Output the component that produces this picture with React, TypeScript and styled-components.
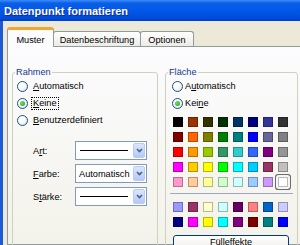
import React from "react";
import styled, { createGlobalStyle } from "styled-components";

const GlobalStyle = createGlobalStyle`
  html, body {
    margin: 0;
    padding: 0;
    background: #ece9d8;
  }
  body {
    font-family: "Liberation Sans", Arial, sans-serif;
    font-size: 9.2px;
    color: #000;
  }
`;

const Window = styled.div`
  width: 300px;
  height: 245px;
  overflow: hidden;
  display: flex;
  flex-direction: column;
  background: #ece9d8;
`;

const TitleBar = styled.div`
  flex: none;
  height: 21px;
  display: flex;
  align-items: center;
  padding-left: 4px;
  background: linear-gradient(
    #3c8cf8 0%,
    #0a5fe8 15%,
    #0055e5 60%,
    #0049d6 90%,
    #003cc0 100%
  );
  color: #fff;
  font: bold 11px "Liberation Sans", Arial, sans-serif;
  text-shadow: 1px 1px 0 #0f2a9c;
`;

const Body = styled.div`
  flex: 1;
  min-height: 0;
  display: flex;
  flex-direction: column;
  border-left: 3px solid #1e5ad6;
  padding: 6px 0 0 4px;
`;

const TabRow = styled.div`
  flex: none;
  height: 19px;
  display: flex;
  align-items: flex-end;
  position: relative;
  z-index: 1;
`;

const Tab = styled.div<{ $active?: boolean; $w: number }>`
  box-sizing: border-box;
  width: ${(p) => p.$w}px;
  height: ${(p) => (p.$active ? 20 : 15)}px;
  margin-bottom: ${(p) => (p.$active ? -1 : 0)}px;
  margin-left: ${(p) => (p.$active ? 0 : -1)}px;
  display: flex;
  align-items: center;
  justify-content: center;
  padding-top: ${(p) => (p.$active ? 2 : 1)}px;
  border: 1px solid #919b9c;
  border-bottom: none;
  border-top: ${(p) => (p.$active ? "3px solid #f2a535" : "1px solid #919b9c")};
  border-radius: 3px 3px 0 0;
  background: ${(p) =>
    p.$active ? "#fcfcfe" : "linear-gradient(#ffffff, #ecebe6)"};
  white-space: nowrap;
  z-index: ${(p) => (p.$active ? 2 : 0)};

  &:first-child {
    margin-left: 0;
  }
`;

const Panel = styled.div`
  flex: 1;
  min-height: 0;
  display: flex;
  gap: 7px;
  align-items: flex-start;
  border: 1px solid #919b9c;
  border-right: none;
  padding: 20px 0 0 4px;
  background: linear-gradient(#fcfcfe, #f3f2ea);
`;

const Group = styled.fieldset<{ $w: number }>`
  box-sizing: border-box;
  width: ${(p) => p.$w}px;
  height: 200px;
  flex: none;
  margin: 0;
  padding: 0;
  border: 1px solid #d0d0bf;
  border-radius: 3px;
`;

const Legend = styled.legend`
  margin-left: 2px;
  padding: 0 1px;
  line-height: 11px;
  color: #15388f;
`;

const RadioRow = styled.div<{ $pad: number; $gap: number }>`
  height: 17px;
  display: flex;
  align-items: center;
  padding-left: ${(p) => p.$pad}px;
  gap: ${(p) => p.$gap}px;
`;

const RadioDot = styled.span<{ $on?: boolean }>`
  box-sizing: border-box;
  width: 11px;
  height: 11px;
  flex: none;
  border-radius: 50%;
  border: 1px solid #1c5180;
  background: radial-gradient(circle at 35% 35%, #ffffff 30%, #dcdcd4 100%);
  display: flex;
  align-items: center;
  justify-content: center;

  &::after {
    content: "";
    display: ${(p) => (p.$on ? "block" : "none")};
    width: 5px;
    height: 5px;
    border-radius: 50%;
    background: radial-gradient(circle at 35% 35%, #6ee06a, #1f9c1f);
  }
`;

const RadioText = styled.span<{ $focus?: boolean }>`
  padding: 0 1px;
  line-height: 11px;
  outline: ${(p) => (p.$focus ? "1px dotted #000" : "none")};
`;

const FieldList = styled.div`
  display: flex;
  flex-direction: column;
  gap: 4px;
  margin-top: 12px;
  padding-left: 20px;
`;

const FieldRow = styled.div`
  display: flex;
  align-items: center;
  height: 19px;
`;

const FieldLabel = styled.span`
  width: 42px;
  flex: none;
`;

const Combo = styled.div`
  box-sizing: border-box;
  width: 72px;
  height: 19px;
  display: flex;
  align-items: center;
  border: 1px solid #7f9db9;
  background: #fff;
`;

const ComboLine = styled.span`
  flex: 1;
  height: 1px;
  margin: 0 5px 0 4px;
  background: #000;
`;

const ComboText = styled.span`
  flex: 1;
  padding-left: 3px;
  white-space: nowrap;
  overflow: hidden;
`;

const DropButton = styled.span`
  box-sizing: border-box;
  width: 12px;
  height: 15px;
  flex: none;
  margin-right: 1px;
  display: flex;
  align-items: center;
  justify-content: center;
  border: 1px solid #b9cbf3;
  border-radius: 2px;
  background: linear-gradient(#dbe6fd, #b5c9f5);
`;

const Swatches = styled.div<{ $top?: number }>`
  display: grid;
  grid-template-columns: repeat(8, 10px);
  gap: 5px;
  padding-left: 7px;
  margin-top: ${(p) => p.$top ?? 0}px;
`;

const Swatch = styled.span<{ $c: string; $sel?: boolean }>`
  box-sizing: border-box;
  width: 10px;
  height: 10px;
  background: ${(p) => p.$c};
  border: 1px solid rgba(0, 0, 0, 0.28);
  box-shadow: ${(p) =>
    p.$sel ? "0 0 0 2px #f6f6f6, 0 0 0 3px #6b6b6b" : "none"};
  border-radius: ${(p) => (p.$sel ? 1 : 0)}px;
`;

const Separator = styled.div`
  height: 1px;
  margin: 6px 4px 8px 4px;
  background: #a0a8c0;
`;

const FillButton = styled.div`
  box-sizing: border-box;
  width: 116px;
  height: 20px;
  margin: 8px 0 0 7px;
  display: flex;
  justify-content: center;
  padding-top: 1px;
  line-height: 11px;
  border: 1px solid #003c74;
  border-radius: 3px;
  background: linear-gradient(#ffffff, #ecebe6 85%, #d6d0c5);
`;

const topColors = [
  "#000000", "#993300", "#333300", "#003300", "#003366", "#000080", "#333399", "#333333",
  "#800000", "#FF6600", "#808000", "#008000", "#008080", "#0000FF", "#666699", "#808080",
  "#FF0000", "#FF9900", "#99CC00", "#339966", "#33CCCC", "#3366FF", "#800080", "#969696",
  "#FF00FF", "#FFCC00", "#FFFF00", "#00FF00", "#00FFFF", "#00CCFF", "#993366", "#C0C0C0",
  "#FF99CC", "#FFCC99", "#FFFF99", "#CCFFCC", "#CCFFFF", "#99CCFF", "#CC99FF", "#FFFFFF",
];

const chartColors = [
  "#9999FF", "#993366", "#FFFFCC", "#CCFFFF", "#660066", "#FF8080", "#0066CC", "#CCCCFF",
  "#000080", "#FF00FF", "#FFFF00", "#00FFFF", "#800080", "#800000", "#008080", "#0000FF",
];

const Chevron = () => (
  <svg width="7" height="5" viewBox="0 0 7 5">
    <path d="M1 1 L3.5 3.6 L6 1" fill="none" stroke="#4d6185" strokeWidth="1.6" />
  </svg>
);

const ComboBox: React.FC<{ text?: string }> = ({ text }) => (
  <Combo>
    {text ? <ComboText>{text}</ComboText> : <ComboLine />}
    <DropButton>
      <Chevron />
    </DropButton>
  </Combo>
);

const App: React.FC = () => (
  <>
    <GlobalStyle />
    <Window>
      <TitleBar>Datenpunkt formatieren</TitleBar>
      <Body>
        <TabRow>
          <Tab $active $w={47}>Muster</Tab>
          <Tab $w={88}>Datenbeschriftung</Tab>
          <Tab $w={54}>Optionen</Tab>
        </TabRow>
        <Panel>
          <Group $w={146}>
            <Legend>Rahmen</Legend>
            <RadioRow $pad={4} $gap={4}>
              <RadioDot />
              <RadioText><u>A</u>utomatisch</RadioText>
            </RadioRow>
            <RadioRow $pad={4} $gap={4}>
              <RadioDot $on />
              <RadioText $focus><u>K</u>eine</RadioText>
            </RadioRow>
            <RadioRow $pad={4} $gap={4}>
              <RadioDot />
              <RadioText><u>B</u>enutzerdefiniert</RadioText>
            </RadioRow>
            <FieldList>
              <FieldRow>
                <FieldLabel>A<u>r</u>t:</FieldLabel>
                <ComboBox />
              </FieldRow>
              <FieldRow>
                <FieldLabel><u>F</u>arbe:</FieldLabel>
                <ComboBox text="Automatisch" />
              </FieldRow>
              <FieldRow>
                <FieldLabel>S<u>t</u>ärke:</FieldLabel>
                <ComboBox />
              </FieldRow>
            </FieldList>
          </Group>
          <Group $w={133}>
            <Legend>Fläche</Legend>
            <RadioRow $pad={6} $gap={1}>
              <RadioDot />
              <RadioText>A<u>u</u>tomatisch</RadioText>
            </RadioRow>
            <RadioRow $pad={6} $gap={1}>
              <RadioDot $on />
              <RadioText>Kei<u>n</u>e</RadioText>
            </RadioRow>
            <Swatches $top={5}>
              {topColors.map((c, i) => (
                <Swatch key={i} $c={c} $sel={i === 39} />
              ))}
            </Swatches>
            <Separator />
            <Swatches>
              {chartColors.map((c, i) => (
                <Swatch key={i} $c={c} />
              ))}
            </Swatches>
            <FillButton>Fülleffekte</FillButton>
          </Group>
        </Panel>
      </Body>
    </Window>
  </>
);

export default App;
